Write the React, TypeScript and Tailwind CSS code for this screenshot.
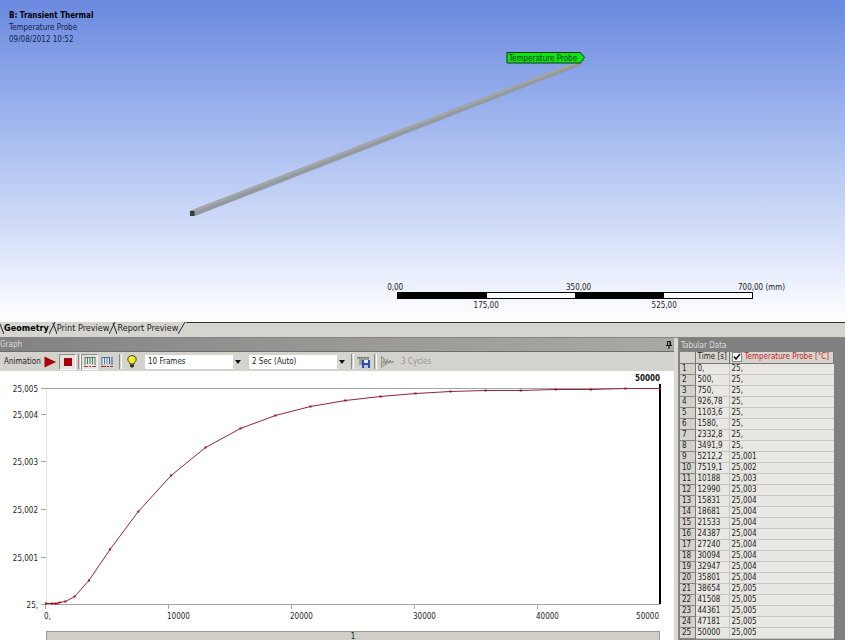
import { useState } from "react";

const rows = [
  { time: "0,", value: "25," },
  { time: "500,", value: "25," },
  { time: "750,", value: "25," },
  { time: "926,78", value: "25," },
  { time: "1103,6", value: "25," },
  { time: "1580,", value: "25," },
  { time: "2332,8", value: "25," },
  { time: "3491,9", value: "25," },
  { time: "5212,2", value: "25,001" },
  { time: "7519,1", value: "25,002" },
  { time: "10188", value: "25,003" },
  { time: "12990", value: "25,003" },
  { time: "15831", value: "25,004" },
  { time: "18681", value: "25,004" },
  { time: "21533", value: "25,004" },
  { time: "24387", value: "25,004" },
  { time: "27240", value: "25,004" },
  { time: "30094", value: "25,004" },
  { time: "32947", value: "25,004" },
  { time: "35801", value: "25,004" },
  { time: "38654", value: "25,005" },
  { time: "41508", value: "25,005" },
  { time: "44361", value: "25,005" },
  { time: "47181", value: "25,005" },
  { time: "50000", value: "25,005" },
];

// curve height for each row, in plot units
const curve = [
  232, 232, 232, 232, 231, 230, 225, 209, 178, 140, 104, 76, 57, 44, 35, 29, 25, 22, 20, 19, 19, 18, 18, 17, 17,
];

const points = rows.map((row, index) => ({
  x: 46 + (parseFloat(row.time.replace(",", ".")) / 50000) * 614,
  y: curve[index] + 0.5,
}));

const yTicks = [
  { label: "25,005", y: 17 },
  { label: "25,004", y: 43 },
  { label: "25,003", y: 90 },
  { label: "25,002", y: 138 },
  { label: "25,001", y: 186 },
  { label: "25,", y: 233 },
];

const xTicks = [
  { label: "0,", x: 46 },
  { label: "10000", x: 169 },
  { label: "20000", x: 292 },
  { label: "30000", x: 415 },
  { label: "40000", x: 538 },
];

function Model() {
  return (
    <svg className="absolute inset-0 h-full w-full" viewBox="0 0 845 322" preserveAspectRatio="xMidYMid meet">
      <path d="M191 210.500 L574 62.500 L583 62.500 L582 65 L195 216 L190 215 Z" fill="#92999f" />
      <path d="M191 210.500 L574 62.500 L580 62.500 L195 212 Z" fill="#a3a6a6" />
      <rect x="190.500" y="211.500" width="3.500" height="4" fill="#3c4a4c" stroke="#1e2626" strokeWidth="0.8" />
      <path d="M507 52.500 H580.500 L584.500 57.500 L580.500 63 H507 Z" fill="#0be614" stroke="#0b3812" />
      <text x="509" y="60.500" fontSize="8" fill="#06350a">
        Temperature Probe
      </text>
    </svg>
  );
}

function Ruler() {
  return (
    <div className="ml-[47%] w-[356px] leading-[9px]">
      <div className="-ml-[10px] -mr-8 flex justify-between">
        <span>0,00</span>
        <span className="pl-4">350,00</span>
        <span>700,00 (mm)</span>
      </div>
      <div className="grid h-[7px] grid-cols-4 border border-black bg-white/60">
        <div className="bg-black" />
        <div />
        <div className="bg-black" />
        <div />
      </div>
      <div className="flex justify-around pt-[2px]">
        <span>175,00</span>
        <span>525,00</span>
      </div>
    </div>
  );
}

function Slant({ back }: { back?: boolean }) {
  return (
    <svg className="h-3 w-2 shrink-0" viewBox="0 0 8 12" fill="none" stroke="#222">
      {back ? <path d="M0 12 L7 0" /> : <path d="M4 1 L8 12 M0 12 L6 0" />}
    </svg>
  );
}

function Tabs() {
  const tabs = ["Geometry", "Print Preview", "Report Preview"];
  const [active, setActive] = useState("Geometry");

  return (
    <div className="flex h-3 bg-[#d6d4cf] text-[9px] leading-3">
      <svg className="h-3 w-1 shrink-0" viewBox="0 0 4 12" fill="none" stroke="#222">
        <path d="M0 2 L4 12" />
      </svg>
      {tabs.map((tab, index) => (
        <div key={tab} className="flex">
          <button
            type="button"
            onClick={() => setActive(tab)}
            className={tab === active ? "whitespace-nowrap font-bold text-black" : "whitespace-nowrap text-[#222]"}
          >
            {tab}
          </button>
          <Slant back={index === tabs.length - 1} />
        </div>
      ))}
      <div className="flex-1 border-t border-[#333]" />
    </div>
  );
}

function Divider() {
  return <div className="h-[15px] w-[3px] shrink-0 border-x border-l-[#8a8984] border-r-white" />;
}

function Dropdown({ label, value, className }: { label: string; value: string; className: string }) {
  return (
    <div className={`relative h-[14px] bg-white ${className}`}>
      <select aria-label={label} className="block h-full w-full appearance-none bg-white pl-[3px] text-[8px] leading-[14px] text-[#222]">
        <option>{value}</option>
      </select>
      <span className="pointer-events-none absolute inset-y-0 right-0 flex w-[10px] items-center justify-center bg-[#d6d4cd]">
        <svg className="h-[4px] w-[6px]" viewBox="0 0 6 4">
          <path d="M0 0 H6 L3 4 Z" fill="#111" />
        </svg>
      </span>
    </div>
  );
}

function Toolbar() {
  return (
    <div className="flex h-[19px] items-center bg-[#d4d2cc] pl-1">
      <span className="w-10 shrink-0">Animation</span>
      <button type="button" aria-label="Play" className="flex h-4 w-[15px] shrink-0 items-center">
        <svg className="h-3 w-3" viewBox="0 0 12 12">
          <path d="M0.500 0.500 L12 6 L0.500 11.500 Z" fill="#a80008" />
        </svg>
      </button>
      <button type="button" aria-label="Stop" className="flex h-4 w-[17px] shrink-0 items-center justify-center border border-b-white border-l-[#8f8e89] border-r-white border-t-[#8f8e89] bg-[#e4e2de]">
        <span className="h-2 w-2 bg-[#a40008]" />
      </button>
      <div className="w-[2px]" />
      <Divider />
      <button type="button" aria-label="Distributed" className="flex h-4 w-[17px] shrink-0 items-center justify-center border border-b-white border-l-[#8f8e89] border-r-white border-t-[#8f8e89] bg-[#e4e2de]">
        <svg className="h-3 w-3" viewBox="0 0 12 12" fill="none">
          <path d="M1 1.500 H11 M1 1 V9 M3.500 1 V8 M6 1 V8 M8.500 1 V8 M11 1 V9" stroke="#4a8060" />
          <path d="M0 10.500 H4 M5 10.500 H7 M8 10.500 H12" stroke="#a63c3c" />
        </svg>
      </button>
      <button type="button" aria-label="Result sets" className="flex h-4 w-[17px] shrink-0 items-center justify-center">
        <svg className="h-3 w-3" viewBox="0 0 12 12" fill="none">
          <rect x="1" y="1" width="8" height="7" fill="#eef0f4" />
          <path d="M1 1.500 H9 M1 1 V9 M3.500 1 V8 M6 1 V8" stroke="#47739c" />
          <path d="M8.500 1 V8 M11 1 V9" stroke="#3455a4" />
          <path d="M0 10.500 H5 M6 10.500 H8 M9 10.500 H12" stroke="#a02828" />
        </svg>
      </button>
      <div className="w-1" />
      <Divider />
      <button type="button" aria-label="Hint" className="flex h-4 w-5 shrink-0 items-center justify-center">
        <svg className="h-[13px] w-[10px]" viewBox="0 0 10 13">
          <path d="M5 0.600 C2.300 0.600 0.800 2.300 0.800 4.300 C0.800 6.200 2.800 7 3 9 H7 C7.200 7 9.200 6.200 9.200 4.300 C9.200 2.300 7.700 0.600 5 0.600 Z" fill="#f5ee1c" stroke="#3a3a10" />
          <path d="M2.800 3.800 Q3.200 2.300 4.600 2" fill="none" stroke="#fff" />
          <path d="M3 9.500 H7 V11 L6 12.500 H4 L3 11 Z" fill="#2a2a2a" />
        </svg>
      </button>
      <div className="w-[3px]" />
      <Dropdown label="Frames" value="10 Frames" className="w-[98px]" />
      <div className="w-[6px]" />
      <Dropdown label="Duration" value="2 Sec (Auto)" className="w-[98px]" />
      <div className="w-1" />
      <Divider />
      <button type="button" aria-label="Export video" className="flex h-4 w-[20px] shrink-0 items-center justify-center">
        <svg className="h-3 w-[14px]" viewBox="0 0 14 12">
          <path d="M0 1 H12 V4 H5 V9 H2 V3 H0 Z" fill="#9a9d9c" />
          <path d="M1 1.500 H12" stroke="#686c6c" strokeDasharray="2 1" />
          <rect x="5" y="4" width="8" height="8" fill="#2850a8" />
          <rect x="7" y="4" width="4" height="3" fill="#e6eaf2" />
          <rect x="7" y="9" width="4" height="3" fill="#b6c4e0" />
        </svg>
      </button>
      <Divider />
      <button type="button" disabled aria-label="Cycles" className="flex h-4 w-[20px] shrink-0 items-center justify-center">
        <svg className="h-3 w-[14px]" viewBox="0 0 14 12" fill="none" stroke="#92918c">
          <path d="M1.500 0 V12 M1 2 H4 V10 H2 M4 3 L6 9 L7 3 L8.500 8 L10 4 L11 7 L12 6 H14 M1 6 H14" />
        </svg>
      </button>
      <span className="pl-1 text-[#96948e]">3 Cycles</span>
    </div>
  );
}

function Graph() {
  return (
    <div className="flex-1 bg-white">
      <svg className="block w-full" viewBox="0 0 674 260" fill="none" fontSize="8">
        <path d="M46.500 17 V233" stroke="#e2e2e2" />
        <path d="M42 17.500 H660 M42 233.500 H660" stroke="#a4a4a4" />
        {yTicks.map((tick) => (
          <g key={tick.label}>
            <path d={`M41 ${tick.y + 0.5} H46`} stroke="#a4a4a4" />
            <text x="38" y={tick.y + 4} textAnchor="end" fill="#222">
              {tick.label}
            </text>
          </g>
        ))}
        {xTicks.map((tick) => (
          <g key={tick.label}>
            <path d={`M${tick.x - 0.5} 233 V238`} stroke="#a4a4a4" />
            <text x={tick.x - 2} y="248" fill="#222">
              {tick.label}
            </text>
          </g>
        ))}
        <text x="659" y="248" textAnchor="end" fill="#222">
          50000
        </text>
        <text x="660" y="10" textAnchor="end" fontWeight="bold" fill="#111">
          50000
        </text>
        <path d="M660 13 V233" stroke="#000" strokeWidth="2" />
        <polyline points={points.map((p) => `${p.x},${p.y}`).join(" ")} stroke="#8c2634" />
        {points.map((p) => (
          <rect key={p.x} x={p.x - 1} y={p.y - 1} width="2" height="2" fill="#a00c1c" />
        ))}
      </svg>
      <div className="ml-[46px] mr-[14px] h-[9px] border border-b-0 border-[#9a9a94] bg-[#cfcfc7] text-center leading-[9px]">
        1
      </div>
    </div>
  );
}

function TabularData() {
  return (
    <table className="w-[154px] table-fixed border-collapse text-left text-[#222]">
      <colgroup>
        <col className="w-[15px]" />
        <col className="w-[34px]" />
        <col />
      </colgroup>
      <thead>
        <tr className="h-[11px] bg-[#d6d4cd]">
          <th className="border-b border-r border-[#777] p-0" />
          <th className="whitespace-nowrap border-b border-r border-[#777] p-0 pl-[2px] font-normal leading-[10px]">Time [s]</th>
          <th className="border-b border-r border-[#777] p-0 font-normal leading-[10px]">
            <label className="flex items-center gap-[3px] whitespace-nowrap pl-[2px] text-[#c51d2b]">
              <span className="relative flex h-[10px] w-[10px] items-center justify-center">
                <input type="checkbox" defaultChecked className="peer block h-[10px] w-[10px] appearance-none border border-[#888] bg-white" />
                <svg className="pointer-events-none absolute hidden h-2 w-2 peer-checked:block" viewBox="0 0 8 8" fill="none" stroke="#111" strokeWidth="1.500">
                  <path d="M1 3.500 L3 6 L7 1" />
                </svg>
              </span>
              Temperature Probe [°C]
            </label>
          </th>
        </tr>
      </thead>
      <tbody>
        {rows.map((row, index) => (
          <tr key={row.time} className="h-[11px] bg-[#e9e7e3]">
            <th scope="row" className="border-b border-r border-b-[#85847f] border-r-[#777] bg-[#d4d2cb] p-0 pl-[2px] font-normal leading-[10px]">
              {index + 1}
            </th>
            <td className="border-b border-r border-[#c6c4bf] p-0 pl-[2px] leading-[10px]">{row.time}</td>
            <td className="border-b border-[#c6c4bf] p-0 pl-[2px] leading-[10px]">{row.value}</td>
          </tr>
        ))}
      </tbody>
    </table>
  );
}

export default function App() {
  return (
    <div className="flex min-h-screen flex-col overflow-hidden bg-[#d6d4cf] font-['DejaVu_Sans_Condensed','DejaVu_Sans',sans-serif] text-[8px] text-[#222]">
      <main className="relative flex flex-1 flex-col justify-between bg-linear-to-b from-[#6a89df] to-white pb-3">
        <Model />
        <div className="pl-[9px] pt-[10px] leading-3 text-[#16224a]">
          <h1 className="font-bold text-black">B: Transient Thermal</h1>
          <p>Temperature Probe</p>
          <p>09/08/2012 10:52</p>
        </div>
        <Ruler />
      </main>
      <Tabs />
      <div className="mt-[3px] flex border-t border-[#85847f]">
        <section className="flex min-w-0 flex-1 flex-col">
          <header className="flex h-[14px] items-center justify-between border-b border-[#6c6c6a] bg-linear-to-r from-[#828282] via-[#989895] to-[#aaa8a2] pr-[2px] text-[#dcdcd8]">
            <h2>Graph</h2>
            <button type="button" aria-label="Pin">
              <svg className="h-2 w-[6px]" viewBox="0 0 6 8" fill="none" stroke="#111">
                <path d="M1.500 4.500 V0.500 H4.500 V4.500 M0 4.500 H6 M3 5 V8 M4 1 V4" />
              </svg>
            </button>
          </header>
          <Toolbar />
          <Graph />
        </section>
        <div className="w-[5px] border-r border-[#8a8a86] bg-[#dad8d2]" />
        <section className="w-[166px] shrink-0 bg-[#808080] pl-px">
          <h2 className="h-[14px] pl-px leading-[15px] text-[#dcdcd8]">Tabular Data</h2>
          <TabularData />
        </section>
      </div>
    </div>
  );
}
